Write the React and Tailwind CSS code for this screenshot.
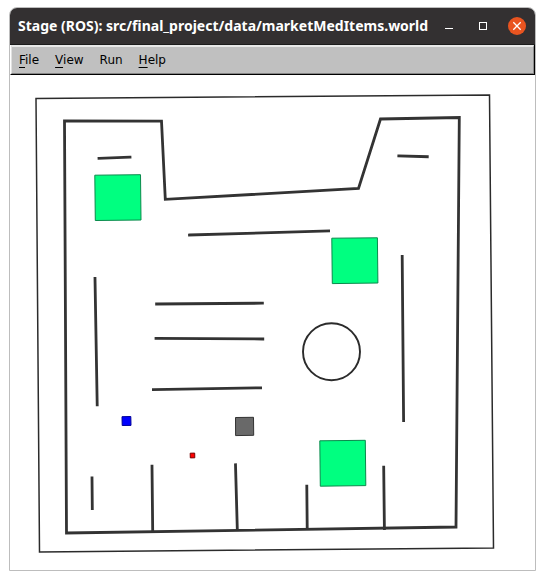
const menus = [
  { key: 'F', rest: 'ile' },
  { key: 'V', rest: 'iew' },
  { key: '', rest: 'Run' },
  { key: 'H', rest: 'elp' },
];

function TitleBar() {
  return (
    <header className="flex h-[37px] items-center justify-between border-b border-[#1c1c1c] bg-[#333031] pr-[9px] pl-2">
      <h1 className="whitespace-nowrap font-['Noto_Sans',sans-serif] text-[14px] leading-5 font-bold text-white">
        Stage (ROS): src/final_project/data/marketMedItems.world
      </h1>
      <div className="flex shrink-0 items-center gap-4">
        <button type="button" aria-label="Minimize" className="size-[18px]">
          <svg viewBox="0 0 18 18" className="size-[18px]" fill="none" stroke="#fff">
            <path d="M5 11.5h8" />
          </svg>
        </button>
        <button type="button" aria-label="Maximize" className="size-[18px]">
          <svg viewBox="0 0 18 18" className="size-[18px]" fill="none" stroke="#fff">
            <rect x="5.5" y="5.5" width="7" height="7" />
          </svg>
        </button>
        <button type="button" aria-label="Close" className="size-[18px] rounded-full bg-[#e95420]">
          <svg viewBox="0 0 18 18" className="size-[18px]" fill="none" stroke="#fff" strokeWidth="1.3">
            <path d="M5.3 5.3l7.4 7.4M12.7 5.3l-7.4 7.4" />
          </svg>
        </button>
      </div>
    </header>
  );
}

function MenuBar() {
  return (
    <nav className="border-r border-b border-l border-r-black border-b-black border-l-white">
      <div className="flex h-[29px] items-center border border-t-2 border-t-[#e8e8e8] border-r-[#8c8c8c] border-b-[#858585] border-l-[#e0e0e0] bg-[#c0c0c0] pr-2 pl-[7px]">
        {menus.map((m) => (
          <button
            key={m.key + m.rest}
            type="button"
            className="pr-4 font-['DejaVu_Sans',sans-serif] text-[12px] leading-4 text-black"
          >
            {m.key && <span className="underline underline-offset-3">{m.key}</span>}
            {m.rest}
          </button>
        ))}
      </div>
    </nav>
  );
}

function World() {
  return (
    <svg viewBox="10 75 525 495" className="block h-auto w-full" role="img" aria-label="Simulated world">
      <path d="M36 98.5L489.5 95L493.5 548L39.5 552Z" fill="none" stroke="#2b2b2b" strokeWidth="1.5" />
      <g fill="none" stroke="#333" strokeWidth="2.8" strokeLinecap="square">
        <path d="M64.5 121L161.5 121.2L165.3 199.3L358.5 188.5L380.5 119L459.3 117.5L456 527L66.5 533Z" />
        <path d="M99 158.3L130 157.2M398.8 156L427.3 156.7" />
        <path d="M189.5 235L328.6 231" />
        <path d="M95 278.3L97.2 404.8M402.2 256.4L403.6 420.6" />
        <path d="M156.6 304L262.4 303.2M156 338.4L262.8 339M153.4 389.7L260.6 387.8" />
        <path d="M92 477.8L92.3 508.6M152 466.2L152.7 531M235.5 464.8L237.3 529M306.8 486.2L307.2 527M383.7 467.2L384.4 528.6" />
      </g>
      <circle cx="331.5" cy="351.7" r="28.5" fill="none" stroke="#2b2b2b" strokeWidth="1.9" />
      <g fill="#00ff80" stroke="#0a8a4c">
        <path d="M94.8 175.2L140.5 174.7L141 220L95.3 220.5Z" />
        <path d="M331.8 238.2L377.4 237.8L377.9 283L332.3 283.6Z" />
        <path d="M319.8 440.8L365.3 440.3L365.8 485.6L320.3 486.2Z" />
      </g>
      <path d="M235.5 417.5L253.5 417.3L253.7 435.3L235.6 435.6Z" fill="#696969" stroke="#333" />
      <path d="M122 416.7L130.8 416.5L131 425.4L122.2 425.5Z" fill="#00f" stroke="#00009a" />
      <path d="M190.2 453.2L194.7 453.1L194.8 457.8L190.3 457.9Z" fill="#f00" stroke="#700" />
    </svg>
  );
}

export default function App() {
  return (
    <div className="min-h-screen bg-white px-[9px] pt-[7px] pb-[9px]">
      <main className="overflow-hidden rounded-t-lg border border-[#bdbdbd] bg-white">
        <TitleBar />
        <MenuBar />
        <World />
      </main>
    </div>
  );
}
